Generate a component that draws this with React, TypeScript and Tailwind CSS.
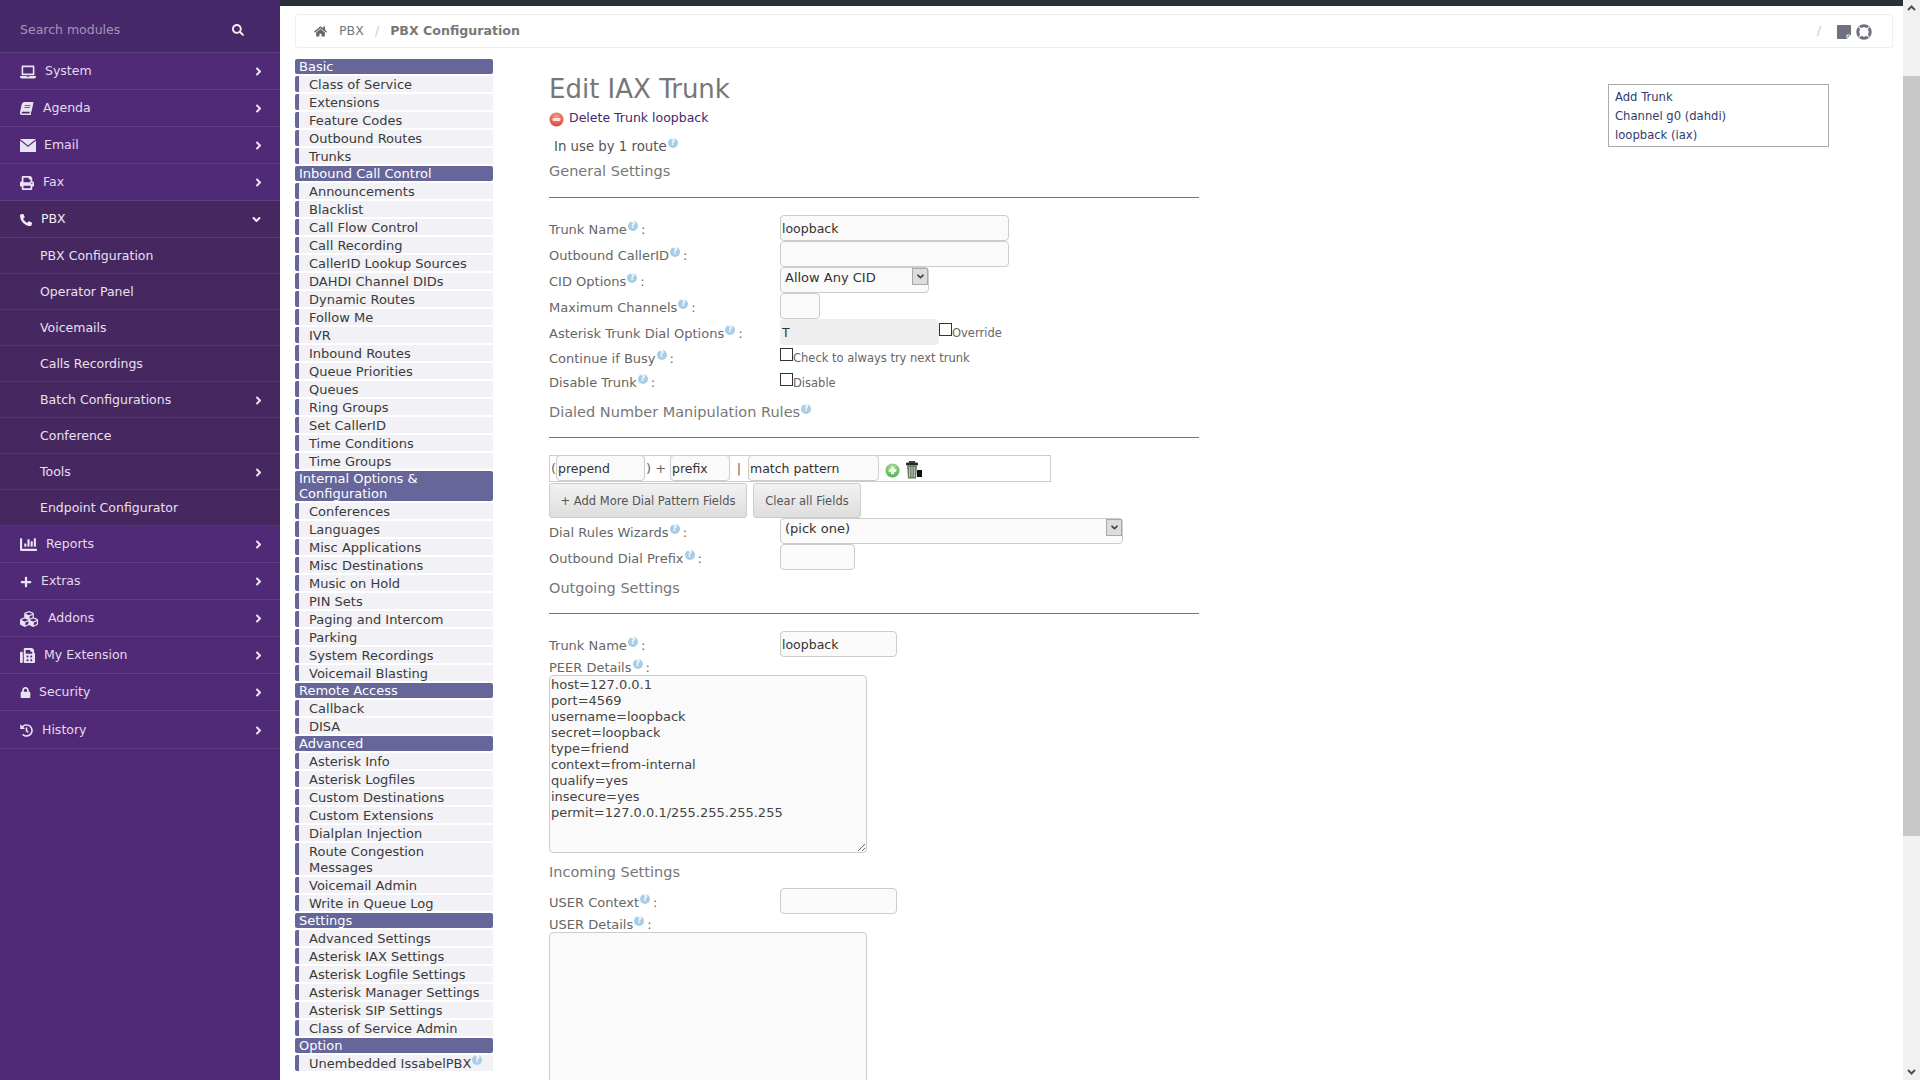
import type { ReactNode } from "react";
import {
  FaAngleDown,
  FaAngleRight,
  FaBook,
  FaChartBar,
  FaCubes,
  FaFax,
  FaHistory,
  FaHome,
  FaLaptop,
  FaLock,
  FaPhoneAlt,
  FaPlus,
  FaPrint,
  FaSearch,
} from "react-icons/fa";

function MailIcon() {
  return (
    <svg width="16" height="13" viewBox="0 0 16 13" className="block">
      <path d="M0 0h16L8 6.5z" fill="currentColor" />
      <path d="M0 1.6l8 6.4 8-6.4V13H0z" fill="currentColor" />
    </svg>
  );
}

function NoteIcon() {
  return (
    <svg width="14" height="14" viewBox="0 0 14 14" className="ml-[16px] text-[#6c7080]">
      <path d="M0 1a1 1 0 0 1 1-1h12a1 1 0 0 1 1 1v8.5L9.5 14H1a1 1 0 0 1-1-1z" fill="currentColor" />
      <path d="M10 13v-3h3" fill="none" stroke="#fff" strokeWidth="1" />
    </svg>
  );
}

function RingIcon() {
  return (
    <svg width="16" height="16" viewBox="0 0 16 16" className="ml-[5px] text-[#6c7080]">
      <circle cx="8" cy="8" r="6.2" fill="none" stroke="currentColor" strokeWidth="3" />
      <path d="M3 3l3 3M13 3l-3 3M3 13l3-3M13 13l-3-3" stroke="#fff" strokeWidth="1.2" />
    </svg>
  );
}

const topItems = [
  { label: "System", icon: <FaLaptop size={16} />, gap: "ml-[9px]" },
  { label: "Agenda", icon: <FaBook size={13} className="-skew-x-12" />, gap: "ml-[10px]" },
  { label: "Email", icon: <MailIcon />, gap: "ml-[8px]" },
  { label: "Fax", icon: <FaPrint size={14} />, gap: "ml-[9px]" },
];

const subItems = [
  { label: "PBX Configuration" },
  { label: "Operator Panel" },
  { label: "Voicemails" },
  { label: "Calls Recordings" },
  { label: "Batch Configurations", more: true },
  { label: "Conference" },
  { label: "Tools", more: true },
  { label: "Endpoint Configurator" },
];

const bottomItems = [
  { label: "Reports", icon: <FaChartBar size={17} />, gap: "ml-[9px]", h: "h-[37px]" },
  { label: "Extras", icon: <FaPlus size={12} />, gap: "ml-[9px]", h: "h-[37px]" },
  { label: "Addons", icon: <FaCubes size={18} />, gap: "ml-[10px]", h: "h-[37px]" },
  { label: "My Extension", icon: <FaFax size={15} />, gap: "ml-[9px]", h: "h-[37px]" },
  { label: "Security", icon: <FaLock size={11} />, gap: "ml-[8px]", h: "h-[37px]" },
  { label: "History", icon: <FaHistory size={13} />, gap: "ml-[9px]", h: "h-[38px]" },
];

const moduleGroups: { title: string; items: string[] }[] = [
  { title: "Basic", items: ["Class of Service", "Extensions", "Feature Codes", "Outbound Routes", "Trunks"] },
  {
    title: "Inbound Call Control",
    items: [
      "Announcements",
      "Blacklist",
      "Call Flow Control",
      "Call Recording",
      "CallerID Lookup Sources",
      "DAHDI Channel DIDs",
      "Dynamic Routes",
      "Follow Me",
      "IVR",
      "Inbound Routes",
      "Queue Priorities",
      "Queues",
      "Ring Groups",
      "Set CallerID",
      "Time Conditions",
      "Time Groups",
    ],
  },
  {
    title: "Internal Options & Configuration",
    items: [
      "Conferences",
      "Languages",
      "Misc Applications",
      "Misc Destinations",
      "Music on Hold",
      "PIN Sets",
      "Paging and Intercom",
      "Parking",
      "System Recordings",
      "Voicemail Blasting",
    ],
  },
  { title: "Remote Access", items: ["Callback", "DISA"] },
  {
    title: "Advanced",
    items: [
      "Asterisk Info",
      "Asterisk Logfiles",
      "Custom Destinations",
      "Custom Extensions",
      "Dialplan Injection",
      "Route Congestion Messages",
      "Voicemail Admin",
      "Write in Queue Log",
    ],
  },
  {
    title: "Settings",
    items: [
      "Advanced Settings",
      "Asterisk IAX Settings",
      "Asterisk Logfile Settings",
      "Asterisk Manager Settings",
      "Asterisk SIP Settings",
      "Class of Service Admin",
    ],
  },
  { title: "Option", items: ["Unembedded IssabelPBX"] },
];

const peerDetails = `host=127.0.0.1
port=4569
username=loopback
secret=loopback
type=friend
context=from-internal
qualify=yes
insecure=yes
permit=127.0.0.1/255.255.255.255`;

function Help() {
  return (
    <span className="relative -top-[6px] ml-[1px] inline-flex h-[10px] w-[10px] items-center justify-center rounded-full bg-[#a8cde6] align-baseline text-[8px] font-bold leading-none text-white">
      ?
    </span>
  );
}

function SideRow({ label, icon, gap, h = "h-[37px]" }: { label: string; icon: ReactNode; gap: string; h?: string }) {
  return (
    <div className={`flex ${h} items-center border-b border-[#5f3d85] pl-[20px] pr-[15px] pt-[1px] text-[12.5px] text-[#e3dbec]`}>
      <span className="text-[#e9e2f2]">{icon}</span>
      <span className={gap}>{label}</span>
      <FaAngleRight size={13} className="ml-auto text-[#e8e1f0]" />
    </div>
  );
}

function Sidebar() {
  return (
    <aside className="w-[280px] shrink-0 bg-[#502a76]">
      <div className="flex h-[53px] items-center border-b border-[#5f3d85] bg-[#47286a] pl-[20px] pr-[36px] pt-[8px] text-[12.5px] text-[#a594b8]">
        Search modules
        <FaSearch size={12} className="ml-auto text-[#f0ebf5]" />
      </div>
      {topItems.map((item) => (
        <SideRow key={item.label} {...item} />
      ))}
      <div className="bg-[#46275f]">
        <div className="flex h-[37px] items-center border-b border-[#5a3a7e] pl-[20px] pr-[17px] pt-[1px] text-[12.5px] text-[#f2eef6]">
          <FaPhoneAlt size={12} />
          <span className="ml-[9px]">PBX</span>
          <FaAngleDown size={13} className="ml-auto" />
        </div>
        {subItems.map((item) => (
          <div
            key={item.label}
            className="flex h-[36px] items-center border-b border-[#56357a] pl-[40px] pr-[15px] pt-[1px] text-[12.5px] text-[#e8e1f0]"
          >
            {item.label}
            {item.more && <FaAngleRight size={13} className="ml-auto" />}
          </div>
        ))}
      </div>
      {bottomItems.map((item) => (
        <SideRow key={item.label} {...item} />
      ))}
    </aside>
  );
}

function ModuleNav() {
  return (
    <nav className="w-[198px] shrink-0 text-[13px]">
      {moduleGroups.map((group) => (
        <div key={group.title}>
          <div className="mb-[2px] rounded-[2px] bg-[#66669a] pl-[4px] leading-[15px] text-white">{group.title}</div>
          {group.items.map((item) => (
            <div
              key={item}
              className={`mb-[2px] ${
                item === "Route Congestion Messages" ? "h-[32px]" : "h-[16px]"
              } rounded-l-[2px] border-l-4 border-[#66669a] bg-[#f1f1f6] pl-[10px] pr-[8px] pt-[1px] leading-[16px] text-[#3a3a3a]`}
            >
              {item}
              {item === "Unembedded IssabelPBX" && <Help />}
            </div>
          ))}
        </div>
      ))}
    </nav>
  );
}

function Field({ value, width, disabled }: { value?: string; width: string; disabled?: boolean }) {
  return (
    <input
      readOnly
      defaultValue={value}
      className={`h-[26px] ${width} rounded-[4px] border px-[1px] text-[12.5px] text-[#333] outline-none ${
        disabled ? "border-[#eee] bg-[#eee]" : "border-[#ccc] bg-[#fafafa]"
      }`}
    />
  );
}

function SelectBox({ value, width }: { value: string; width: string }) {
  return (
    <div className={`flex h-[26px] ${width} items-start justify-between rounded-[4px] border border-[#ccc] bg-[#fafafa] pl-[4px] text-[13px] leading-[16px] text-[#333]`}>
      <span className="pt-[2px]">{value}</span>
      <span className="flex h-[17px] w-[16px] items-center justify-center border border-[#aaa] bg-[#ddd] text-[#444]">
        <FaAngleDown size={11} />
      </span>
    </div>
  );
}

function Row({
  label,
  h = "h-[26px]",
  labelPt = "pt-[4px]",
  children,
}: {
  label: string;
  h?: string;
  labelPt?: string;
  children: ReactNode;
}) {
  return (
    <div className={`flex ${h} items-center`}>
      <div className={`w-[231px] shrink-0 ${labelPt} text-[13px] text-[#666]`}>
        {label}
        <Help />
        <span className="ml-[3px]">:</span>
      </div>
      {children}
    </div>
  );
}

function CheckLabel({ label }: { label: string }) {
  return (
    <span className="flex items-start pt-[1px] text-[11.5px] leading-[16px] text-[#666]">
      <span className="-mt-[2px] h-[13px] w-[13px] border border-[#333] bg-white" />
      {label}
    </span>
  );
}

function SectionHead({ title, help, mt }: { title: string; help?: boolean; mt: string }) {
  return (
    <div className={`${mt} h-[20px] text-[14.5px] leading-[20px] text-[#777]`}>
      {title}
      {help && <Help />}
    </div>
  );
}

function TrunkForm() {
  return (
    <div className="ml-[56px] w-[650px] shrink-0">
      <h1 className="mt-[14px] h-[30px] pt-[1px] text-[26px] leading-[30px] text-[#777]">Edit IAX Trunk</h1>
      <div className="mt-[5px] flex h-[20px] items-center text-[12.5px] text-[#43286f]">
        <svg width="15" height="15" viewBox="0 0 15 15" className="mr-[5px] mt-[3px]">
          <defs>
            <radialGradient id="delGloss" cx="50%" cy="30%" r="70%">
              <stop offset="0%" stopColor="#f59a8c" />
              <stop offset="100%" stopColor="#d9483a" />
            </radialGradient>
          </defs>
          <circle cx="7.5" cy="7.5" r="7" fill="url(#delGloss)" />
          <rect x="3.5" y="6" width="8" height="3" rx="1" fill="#fbe3df" />
        </svg>
        Delete Trunk loopback
      </div>
      <div className="mt-[8px] h-[20px] pl-[5px] pt-[1px] text-[13.3px] leading-[20px] text-[#555]">
        In use by 1 route
        <Help />
      </div>

      <SectionHead title="General Settings" mt="mt-[4px] pt-[1px]" />
      <div className="mb-[17px] mt-[17px] h-[1px] bg-[#777]" />
      <Row label="Trunk Name">
        <Field value="loopback" width="w-[229px]" />
      </Row>
      <Row label="Outbound CallerID">
        <Field width="w-[229px]" />
      </Row>
      <Row label="CID Options">
        <SelectBox value="Allow Any CID" width="w-[149px]" />
      </Row>
      <Row label="Maximum Channels">
        <Field width="w-[40px]" />
      </Row>
      <Row label="Asterisk Trunk Dial Options">
        <Field value="T" width="w-[159px]" disabled />
        <CheckLabel label="Override" />
      </Row>
      <Row label="Continue if Busy" h="h-[25px]" labelPt="pt-[2px]">
        <CheckLabel label="Check to always try next trunk" />
      </Row>
      <Row label="Disable Trunk" h="h-[24px]" labelPt="pt-[2px]">
        <CheckLabel label="Disable" />
      </Row>

      <SectionHead title="Dialed Number Manipulation Rules" help mt="mt-[8px]" />
      <div className="mb-[17px] mt-[15px] h-[1px] bg-[#777]" />
      <div className="flex h-[27px] w-[502px] items-end border border-[#ccc] pl-[1px] text-[13px] text-[#666]">
        <span className="w-[5px] self-center">(</span>
        <Field value="prepend" width="w-[89px]" />
        <span className="ml-[1px] w-[24px] self-center">) +</span>
        <Field value="prefix" width="w-[60px]" />
        <span className="w-[18px] self-center text-center">|</span>
        <Field value="match pattern" width="w-[131px]" />
        <svg width="15" height="15" viewBox="0 0 15 15" className="mb-[3px] ml-[6px]">
          <defs>
            <radialGradient id="addGloss" cx="50%" cy="30%" r="70%">
              <stop offset="0%" stopColor="#b5e3a8" />
              <stop offset="100%" stopColor="#55ad52" />
            </radialGradient>
          </defs>
          <circle cx="7.5" cy="7.5" r="7" fill="url(#addGloss)" />
          <path d="M6 3.8h3v2.2h2.2v3H9v2.2H6V9H3.8V6H6z" fill="#eef9ea" />
        </svg>
        <svg width="17" height="18" viewBox="0 0 17 18" className="mb-[2px] ml-[5px]">
          <rect x="12" y="9" width="5" height="7" fill="#111" />
          <rect x="4" y="0" width="6" height="2" fill="#444" />
          <rect x="1" y="1.5" width="12" height="3" rx="1" fill="#2b2b2b" />
          <path d="M2 4.5h10l-1 13H3z" fill="#6f7a68" />
          <path d="M4.7 6v10M7 6v10M9.3 6v10" stroke="#c8d0bf" strokeWidth="1" />
        </svg>
      </div>
      <div className="mt-[1px] flex">
        <button className="h-[35px] w-[198px] rounded-[3px] border border-[#ccc] bg-gradient-to-b from-[#f2f2f2] to-[#dedede] pt-[3px] text-[11.5px] text-[#555]">
          + Add More Dial Pattern Fields
        </button>
        <button className="ml-[6px] h-[35px] w-[108px] rounded-[3px] border border-[#ccc] bg-gradient-to-b from-[#f2f2f2] to-[#dedede] pt-[3px] text-[11.5px] text-[#555]">
          Clear all Fields
        </button>
      </div>
      <Row label="Dial Rules Wizards">
        <SelectBox value="(pick one)" width="w-[343px]" />
      </Row>
      <Row label="Outbound Dial Prefix">
        <Field width="w-[75px]" />
      </Row>

      <SectionHead title="Outgoing Settings" mt="mt-[8px]" />
      <div className="mb-[17px] mt-[15px] h-[1px] bg-[#777]" />
      <Row label="Trunk Name">
        <Field value="loopback" width="w-[117px]" />
      </Row>
      <div className="mt-[1px] h-[17px] pt-[1px] text-[13px] leading-[17px] text-[#666]">
        PEER Details
        <Help />
        <span className="ml-[3px]">:</span>
      </div>
      <textarea
        readOnly
        defaultValue={peerDetails}
        className="block h-[178px] w-[318px] overflow-hidden rounded-[4px] border border-[#ccc] bg-[#fafafa] px-[1px] py-[1px] text-[13px] leading-[16px] text-[#444] outline-none"
      />

      <SectionHead title="Incoming Settings" mt="mt-[9px]" />
      <div className="mt-[6px]">
        <Row label="USER Context">
          <Field width="w-[117px]" />
        </Row>
      </div>
      <div className="mt-[1px] h-[17px] pt-[1px] text-[13px] leading-[17px] text-[#666]">
        USER Details
        <Help />
        <span className="ml-[3px]">:</span>
      </div>
      <textarea readOnly className="block h-[300px] w-[318px] rounded-[4px] border border-[#ccc] bg-[#fafafa] outline-none" />
    </div>
  );
}

function TrunkList() {
  return (
    <div className="ml-[409px] mt-[25px] h-[63px] w-[221px] border border-[#aaa] px-[6px] py-[3px] text-[11.6px] leading-[19px] text-[#2f3b6e]">
      <div>Add Trunk</div>
      <div>Channel g0 (dahdi)</div>
      <div>loopback (iax)</div>
    </div>
  );
}

function PageScrollbar() {
  return (
    <div className="flex w-[17px] shrink-0 flex-col bg-[#f1f1f1]">
      <div className="flex h-[16px] items-center justify-center text-[#505050]">
        <svg width="9" height="6" viewBox="0 0 9 6">
          <path d="M1 5l3.5-3.5L8 5" fill="none" stroke="currentColor" strokeWidth="2" />
        </svg>
      </div>
      <div className="mt-[60px] h-[760px] bg-[#c8c8c8]" />
      <div className="mt-auto flex h-[16px] items-center justify-center text-[#505050]">
        <svg width="9" height="6" viewBox="0 0 9 6">
          <path d="M1 1l3.5 3.5L8 1" fill="none" stroke="currentColor" strokeWidth="2" />
        </svg>
      </div>
    </div>
  );
}

export default function App() {
  return (
    <div className="flex h-screen overflow-hidden bg-white font-['DejaVu_Sans',sans-serif]">
      <Sidebar />
      <main className="min-w-0 flex-1">
        <div className="h-[6px] bg-[#2b2e3b]" />
        <div className="ml-[15px] mr-[10px] mt-[8px] flex h-[34px] items-center rounded-[3px] border border-[#eee] pl-[18px] pr-[20px] pt-[1px] text-[12.6px]">
          <FaHome size={13} className="text-[#666]" />
          <span className="ml-[12px] text-[#777]">PBX</span>
          <span className="ml-[11px] text-[#ccc]">/</span>
          <span className="ml-[11px] font-bold text-[#777]">PBX Configuration</span>
          <span className="ml-auto text-[#ccc]">/</span>
          <NoteIcon />
          <RingIcon />
        </div>
        <div className="ml-[15px] mt-[11px] flex items-start">
          <ModuleNav />
          <TrunkForm />
          <TrunkList />
        </div>
      </main>
      <PageScrollbar />
    </div>
  );
}
